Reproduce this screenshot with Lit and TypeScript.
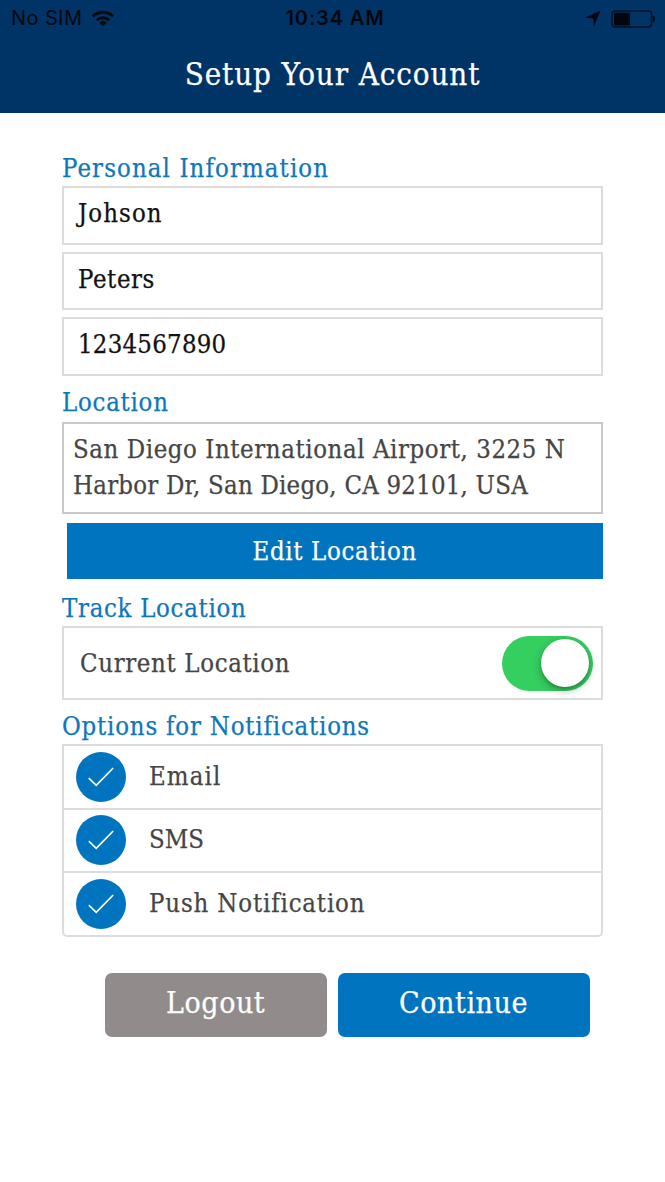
import { LitElement, html, css } from "lit";
import { customElement, property, state } from "lit/decorators.js";

const serif = css`"DejaVu Serif Condensed", "DejaVu Serif", serif`;

@customElement("status-bar")
export class StatusBar extends LitElement {
  static styles = css`
    :host {
      display: grid;
      grid-template-columns: 1fr auto 1fr;
      align-items: center;
      height: 37px;
      padding: 0 10px 0 11px;
      font-family: Inter, sans-serif;
      font-size: 20px;
      line-height: 37px;
      color: #02070f;
    }
    .left, .right { display: flex; align-items: center; }
    .carrier { letter-spacing: 0.4px; }
    .wifi { display: block; margin-left: 9px; }
    .time { font-weight: 600; letter-spacing: 0.85px; padding-left: 4px; }
    .right { justify-content: flex-end; gap: 10px; }
    .arrow { display: block; }
    .battery { display: block; margin-right: -1px; }
  `;
  render() {
    return html`
      <div class="left">
        <span class="carrier">No SIM</span>
        <svg class="wifi" width="24" height="17" viewBox="0 0 24 17">
          <g fill="none" stroke="currentColor" stroke-width="3">
            <path d="M1.8 6.3a14.6 14.6 0 0 1 20.4 0" />
            <path d="M5.7 10.3a9 9 0 0 1 12.6 0" />
          </g>
          <path fill="currentColor" d="M12 16.3l-3.8-3.9a5.5 5.5 0 0 1 7.6 0z" />
        </svg>
      </div>
      <div class="time">10:34 AM</div>
      <div class="right">
        <svg class="arrow" width="16" height="17" viewBox="0 0 16 17">
          <path fill="currentColor" d="M15.6 .6L9 16.4 8.3 8.6 .4 7.6z" />
        </svg>
        <svg class="battery" width="45" height="18" viewBox="0 0 45 18">
          <rect x="1.1" y="1" width="39.4" height="16" rx="3" fill="none" stroke="currentColor" stroke-opacity=".75" stroke-width="1.4" />
          <rect x="3" y="2.8" width="16" height="12.6" rx="1" fill="currentColor" />
          <path fill="currentColor" d="M41.6 5.6c1.6.3 2.4 1.7 2.4 3.4s-.8 3.1-2.4 3.4z" />
        </svg>
      </div>
    `;
  }
}

@customElement("toggle-switch")
export class ToggleSwitch extends LitElement {
  @property({ type: Boolean, reflect: true }) on = false;
  static styles = css`
    :host { display: block; }
    .track {
      display: flex;
      justify-content: flex-start;
      box-sizing: border-box;
      width: 91px;
      height: 55px;
      padding: 3.5px;
      border-radius: 28px;
      background: #ddd;
    }
    :host([on]) .track { background: #35cf60; justify-content: flex-end; }
    .knob {
      width: 48px;
      height: 48px;
      border-radius: 50%;
      background: #fff;
      box-shadow: 0 3px 8px rgba(0, 0, 0, 0.32), 0 2px 2px rgba(0, 0, 0, 0.12);
    }
  `;
  render() {
    return html`<div class="track" @click=${() => (this.on = !this.on)}><div class="knob"></div></div>`;
  }
}

@customElement("check-circle")
export class CheckCircle extends LitElement {
  static styles = css`
    :host { display: block; }
    svg { display: block; }
  `;
  render() {
    return html`<svg width="50" height="50" viewBox="0 0 50 50">
      <circle cx="25" cy="25" r="25" fill="#0074bf" />
      <path d="M12.8 26.2L20.2 33.4 37.2 16" fill="none" stroke="#fff" stroke-width="1.7" />
    </svg>`;
  }
}

@customElement("app-root")
export class AppRoot extends LitElement {
  @state() private fields = [
    { value: "Johson", cls: "first" },
    { value: "Peters", cls: "last" },
    { value: "1234567890", cls: "phone" },
  ];
  @state() private options = [
    { label: "Email", cls: "email" },
    { label: "SMS", cls: "sms" },
    { label: "Push Notification", cls: "push" },
  ];

  static styles = css`
    :host {
      display: block;
      min-height: 1182px;
      background: #fff;
      font-family: ${serif};
      font-size: 25.5px;
      color: #454545;
      -webkit-text-stroke: 0.25px currentColor;
    }
    status-bar { -webkit-text-stroke: 0; }
    header { height: 113px; background: #003466; }
    h1 {
      margin: 0;
      font-size: 31px;
      font-weight: 400;
      line-height: 74px;
      letter-spacing: 0.9px;
      text-align: center;
      color: #fff;
    }
    main { display: flex; flex-direction: column; padding: 37.2px 62.5px 0 62px; }
    h2 {
      margin: 0;
      font-size: 25.5px;
      font-weight: 400;
      line-height: 36px;
      color: #0f76b9;
    }
    .h-personal { letter-spacing: 1.1px; }
    .h-location { letter-spacing: 0.75px; padding: 8px 0 2.5px; }
    .h-track { letter-spacing: 0.7px; padding-top: 10.5px; }
    .h-options { letter-spacing: 0.8px; padding-top: 8.2px; }
    .box { box-sizing: border-box; border: 2px solid #dcdcdc; }
    .fields { display: flex; flex-direction: column; gap: 7px; }
    .field { height: 58.5px; padding-left: 14px; line-height: 50px; color: #111; }
    .first { letter-spacing: 1.1px; }
    .last { letter-spacing: 0.6px; }
    .phone { letter-spacing: 0.25px; }
    .address { height: 92px; padding: 8px 0 0 9px; border-color: #c9c9c9; line-height: 35.5px; white-space: nowrap; }
    .line1 { letter-spacing: 0.58px; }
    .line2 { letter-spacing: 0.23px; }
    .edit {
      margin: 8.7px 0 0 5px;
      height: 56.5px;
      line-height: 56px;
      background: #0074bf;
      color: #fff;
      text-align: center;
      letter-spacing: 0.65px;
    }
    .track { display: flex; align-items: center; justify-content: space-between; height: 74px; padding: 1px 8px 0 16px; }
    .current { letter-spacing: 0.65px; line-height: 36px; padding-bottom: 1px; }
    .list { display: flex; flex-direction: column; border-radius: 0 0 5px 5px; }
    .option { display: flex; align-items: center; gap: 23px; height: 61.6px; padding-left: 12px; }
    .option + .option { border-top: 2px solid #dcdcdc; }
    .label { line-height: 58px; padding-bottom: 2px; }
    .email { letter-spacing: 1.1px; }
    .sms { letter-spacing: 0; }
    .push { letter-spacing: 0.85px; }
    .actions { display: flex; gap: 11px; margin: 36px 13px 0 42.7px; }
    .btn {
      height: 63.7px;
      border-radius: 7px;
      font-size: 30px;
      line-height: 60px;
      text-align: center;
      color: #fff;
      letter-spacing: 0.55px;
    }
    .logout { flex: 222 0 0; background: #918c8b; }
    .continue { flex: 252 0 0; background: #0074bf; }
  `;

  render() {
    return html`
      <header>
        <status-bar></status-bar>
        <h1>Setup Your Account</h1>
      </header>
      <main>
        <h2 class="h-personal">Personal Information</h2>
        <div class="fields">
          ${this.fields.map((f) => html`<div class="box field ${f.cls}">${f.value}</div>`)}
        </div>
        <h2 class="h-location">Location</h2>
        <div class="box address">
          <div class="line1">San Diego International Airport, 3225 N</div>
          <div class="line2">Harbor Dr, San Diego, CA 92101, USA</div>
        </div>
        <div class="edit">Edit Location</div>
        <h2 class="h-track">Track Location</h2>
        <div class="box track">
          <span class="current">Current Location</span>
          <toggle-switch on></toggle-switch>
        </div>
        <h2 class="h-options">Options for Notifications</h2>
        <div class="box list">
          ${this.options.map(
            (o) => html`<div class="option"><check-circle></check-circle><span class="label ${o.cls}">${o.label}</span></div>`
          )}
        </div>
        <div class="actions">
          <div class="btn logout">Logout</div>
          <div class="btn continue">Continue</div>
        </div>
      </main>
    `;
  }
}
